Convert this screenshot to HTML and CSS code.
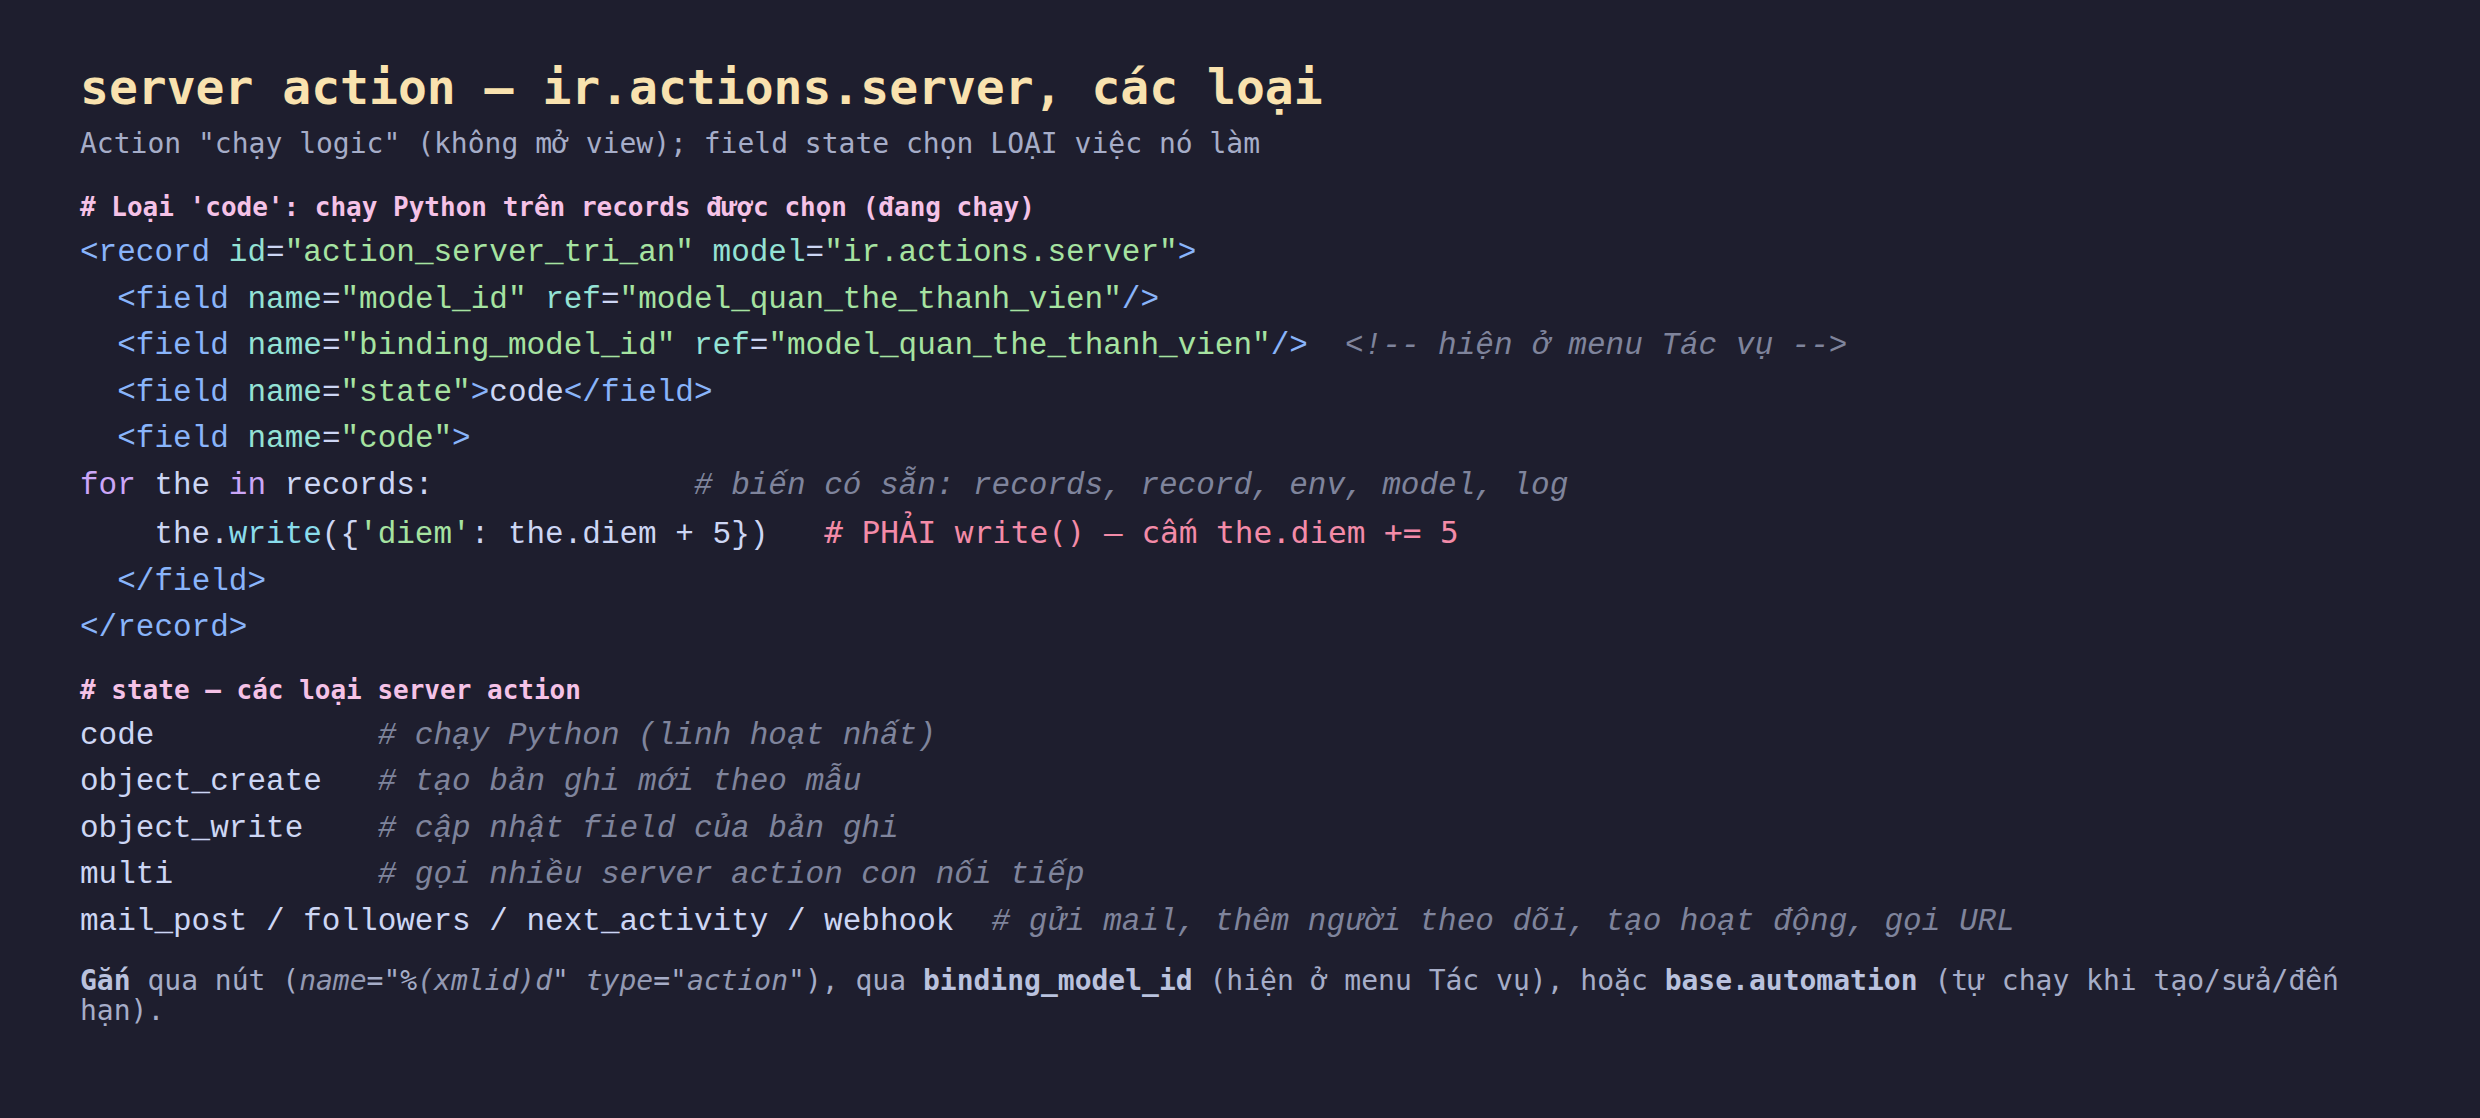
FILE: index.html
```html
<!DOCTYPE html>
<html lang="vi">
<head>
<meta charset="utf-8">
<title>server action — ir.actions.server</title>
<link rel="stylesheet" href="styles.css">
</head>
<body>
<main class="page">
  <h1 class="title">server action — ir.actions.server, các loại</h1>
  <p class="subtitle">Action "chạy logic" (không mở view); field state chọn LOẠI việc nó làm</p>

  <section class="block block-first">
    <div class="block-head"># Loại 'code': chạy Python trên records được chọn (đang chạy)</div>
<pre class="code"><span class="tag">&lt;record</span> <span class="attr">id</span><span class="eq">=</span><span class="str">"action_server_tri_an"</span> <span class="attr">model</span><span class="eq">=</span><span class="str">"ir.actions.server"</span><span class="tag">&gt;</span>
  <span class="tag">&lt;field</span> <span class="attr">name</span><span class="eq">=</span><span class="str">"model_id"</span> <span class="attr">ref</span><span class="eq">=</span><span class="str">"model_quan_the_thanh_vien"</span><span class="tag">/&gt;</span>
  <span class="tag">&lt;field</span> <span class="attr">name</span><span class="eq">=</span><span class="str">"binding_model_id"</span> <span class="attr">ref</span><span class="eq">=</span><span class="str">"model_quan_the_thanh_vien"</span><span class="tag">/&gt;</span>  <span class="cmt">&lt;!-- hiện ở menu Tác vụ --&gt;</span>
  <span class="tag">&lt;field</span> <span class="attr">name</span><span class="eq">=</span><span class="str">"state"</span><span class="tag">&gt;</span>code<span class="tag">&lt;/field&gt;</span>
  <span class="tag">&lt;field</span> <span class="attr">name</span><span class="eq">=</span><span class="str">"code"</span><span class="tag">&gt;</span>
<span class="kw">for</span> the <span class="kw">in</span> records:              <span class="cmt"># biến có sẵn: records, record, env, model, log</span>
    the.<span class="fn">write</span>({<span class="str">'diem'</span>: the.diem + 5})   <span class="warn"># PHẢI write() — cấm the.diem += 5</span>
  <span class="tag">&lt;/field&gt;</span>
<span class="tag">&lt;/record&gt;</span></pre>
  </section>

  <section class="block">
    <div class="block-head"># state — các loại server action</div>
<pre class="code">code            <span class="cmt"># chạy Python (linh hoạt nhất)</span>
object_create   <span class="cmt"># tạo bản ghi mới theo mẫu</span>
object_write    <span class="cmt"># cập nhật field của bản ghi</span>
multi           <span class="cmt"># gọi nhiều server action con nối tiếp</span>
mail_post / followers / next_activity / webhook  <span class="cmt"># gửi mail, thêm người theo dõi, tạo hoạt động, gọi URL</span></pre>
  </section>

  <p class="note"><b>Gắn</b> qua nút (<i>name</i>="%<i>(xmlid)d</i>" <i>type</i>="<i>action</i>"), qua <b>binding_model_id</b> (hiện ở menu Tác vụ), hoặc <b>base.automation</b> (tự chạy khi tạo/sửa/đến hạn).</p>
</main>
</body>
</html>
```

FILE: styles.css
```css
html, body {
  margin: 0;
  padding: 0;
  background: #1e1e2e;
  min-height: 100%;
}

.page {
  padding: 59px 80px 40px 80px;
  font-family: "DejaVu Sans Mono", monospace;
  color: #a6adc8;
}

.title {
  margin: 0;
  font-family: "DejaVu Sans Mono", monospace;
  font-weight: 700;
  font-size: 48px;
  line-height: 56px;
  color: #f9e2af;
}

.subtitle {
  margin: 12px 0 0 0;
  font-size: 28px;
  line-height: 34px;
  color: #a6adc8;
}

.block-first {
  margin-top: 27px;
}

.block + .block {
  margin-top: 19px;
}

.block-head {
  font-family: "DejaVu Sans Mono", monospace;
  font-weight: 700;
  font-size: 26px;
  line-height: 39px;
  color: #f5c2e7;
}

.code {
  margin: 3px 0 0 0;
  font-family: "Liberation Mono", monospace;
  font-size: 31px;
  line-height: 46.5px;
  color: #cdd6f4;
  white-space: pre;
}

.tag { color: #89b4fa; }
.attr { color: #94e2d5; }
.eq { color: #cdd6f4; }
.str { color: #a6e3a1; }
.kw { color: #cba6f7; }
.fn { color: #89dceb; }
.cmt { color: #7f849c; font-style: italic; }
.warn {
  color: #f38ba8;
  font-family: "DejaVu Sans Mono", monospace;
}

.note {
  margin: 21px 0 0 0;
  font-size: 28px;
  line-height: 30px;
  color: #a6adc8;
}

.note b {
  color: #bac2de;
  font-weight: 700;
}

.note i {
  color: #9399b2;
  font-style: italic;
}
```
